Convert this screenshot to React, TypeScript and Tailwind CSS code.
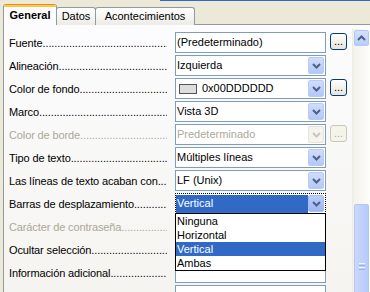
import React from "react";

/** XP-style property sheet of a form control, with the scroll-bar combo opened. */

type Kind = "text" | "combo" | "combo-off" | "color" | "focus";

interface Row {
  label: string;
  kind: Kind;
  value?: string;
  off?: boolean;
  more?: "on" | "off";
}

const rows: Row[] = [
  { label: "Fuente", kind: "text", value: "(Predeterminado)", more: "on" },
  { label: "Alineación", kind: "combo", value: "Izquierda" },
  { label: "Color de fondo", kind: "color", value: "0x00DDDDDD", more: "on" },
  { label: "Marco", kind: "combo", value: "Vista 3D" },
  { label: "Color de borde", kind: "combo-off", value: "Predeterminado", off: true, more: "off" },
  { label: "Tipo de texto", kind: "combo", value: "Múltiples líneas" },
  { label: "Las líneas de texto acaban con", kind: "combo", value: "LF (Unix)" },
  { label: "Barras de desplazamiento", kind: "focus", value: "Vertical" },
  { label: "Carácter de contraseña", kind: "text", off: true },
  { label: "Ocultar selección", kind: "combo" },
  { label: "Información adicional", kind: "text" },
  { label: "", kind: "text" },
];

const options = ["Ninguna", "Horizontal", "Vertical", "Ambas"];

// leader dots, a few more than the label column needs (the rest is clipped)
const dotsFor = (label: string) => ".".repeat(Math.max(6, 62 - Math.round(label.length * 1.5)));

function Chevron({ color, up = false }: { color: string; up?: boolean }) {
  return (
    <svg width="9" height="6" viewBox="0 0 9 6" className={up ? "rotate-180" : ""}>
      <polyline points="1,1 4.5,4.5 8,1" fill="none" stroke={color} strokeWidth="2" />
    </svg>
  );
}

function ArrowButton({ state }: { state: "on" | "off" | "hot" }) {
  const look =
    state === "off"
      ? "border-[#E6E4DA] bg-[#F4F3EE]"
      : state === "hot"
        ? "border-[#A7BEF3] bg-gradient-to-b from-[#B9CDFB] to-[#9DB7F4]"
        : "border-[#B9CBF5] bg-gradient-to-b from-[#CFDCFC] to-[#B3C8F7]";
  return (
    <div className={`mr-px flex h-[17px] w-[16px] shrink-0 items-center justify-center rounded-[2px] border ${look}`}>
      <Chevron color={state === "off" ? "#C9C7BA" : "#4D6185"} />
    </div>
  );
}

function MoreButton({ off }: { off: boolean }) {
  return (
    <div
      className={`mt-px flex h-[17px] w-[17px] items-end justify-center rounded-[3px] border pb-[2px] text-[11px] leading-none ${
        off
          ? "border-[#C9C7BA] bg-[#F5F4EA] text-[#ACA899]"
          : "border-[#003C74] bg-gradient-to-b from-white to-[#E6E4DA] text-black"
      }`}
    >
      ...
    </div>
  );
}

function Field({ row }: { row: Row }) {
  if (row.kind === "focus") {
    return (
      <div className="relative flex h-[21px] w-[151px] items-center border border-dotted border-black bg-white">
        <div className="flex h-[18px] flex-1 items-center bg-[#316AC5] pl-px text-white">{row.value}</div>
        <ArrowButton state="hot" />
        <ul className="absolute left-[-1px] top-[19px] z-10 w-[151px] border border-black bg-white">
          {options.map((o) => (
            <li
              key={o}
              className={`flex h-[14px] items-center pl-px ${o === "Vertical" ? "bg-[#316AC5] text-white" : "text-black"}`}
            >
              {o}
            </li>
          ))}
        </ul>
      </div>
    );
  }
  const combo = row.kind === "combo" || row.kind === "combo-off" || row.kind === "color";
  return (
    <div className="flex h-[21px] w-[151px] items-center border border-[#7F9DB9] bg-white">
      <div className={`flex flex-1 items-center pl-px ${row.off ? "text-[#ACA899]" : "text-black"}`}>
        {row.kind === "color" && (
          <span className="ml-[2px] mr-[5px] h-[10px] w-[18px] border border-[#555] bg-[#DDDDDD]" />
        )}
        {row.value}
      </div>
      {combo && <ArrowButton state={row.kind === "combo-off" ? "off" : "on"} />}
    </div>
  );
}

function Tab({ label, width, active }: { label: string; width: string; active?: boolean }) {
  if (active) {
    return (
      <div className={`relative z-10 -mr-px flex h-[21px] flex-col overflow-hidden rounded-t-[3px] border-x border-[#919B9C] bg-[#FCFCFE] ${width}`}>
        <div className="h-[1px] bg-[#E68B2C]" />
        <div className="h-[2px] bg-[#FFC73C]" />
        <div className="flex flex-1 items-center justify-center pb-[2px] font-bold">{label}</div>
      </div>
    );
  }
  return (
    <div className={`-mr-px mt-[3px] flex h-[18px] items-center justify-center rounded-t-[3px] border border-b-0 border-[#919B9C] bg-gradient-to-b from-white to-[#ECEBE6] ${width}`}>
      {label}
    </div>
  );
}

export default function App() {
  return (
    <div className="relative h-[292px] w-[370px] overflow-hidden bg-[#ECE9D8] font-['Liberation_Sans',Arial,sans-serif] text-[11px] text-black">
      <div className="ml-[160px] h-px bg-[#3169C6]" />
      <div className="flex items-end pl-[3px] pt-[3px]">
        <Tab label="General" width="w-[54px]" active />
        <Tab label="Datos" width="w-[40px]" />
        <Tab label="Acontecimientos" width="w-[100px]" />
        <div className="flex-1" />
      </div>
      <div className="-mt-px ml-[3px] flex h-[300px] border-l border-t border-[#919B9C] bg-gradient-to-b from-[#FCFCFE] to-[#F4F3EE]">
        <div className="flex w-[348px] flex-col gap-[2px] pl-[5px] pt-[7px]">
          {rows.map((r, i) => (
            <div key={i} className="flex h-[21px] items-center">
              <div
                className={`mr-[8px] flex w-[158px] overflow-hidden whitespace-nowrap pt-px tracking-[-0.12px] ${
                  r.off ? "text-[#ACA899]" : ""
                }`}
              >
                <span>{r.label}</span>
                {r.label && <span className="flex-1 overflow-hidden">{dotsFor(r.label)}</span>}
              </div>
              <Field row={r} />
              <div className="ml-[4px] w-[17px] self-start">
                {r.more && <MoreButton off={r.more === "off"} />}
              </div>
            </div>
          ))}
        </div>
        <div className="mt-[4px] flex w-[18px] flex-col border-l border-[#EEEDE5] bg-gradient-to-r from-[#F3F1EA] to-[#FDFDFA]">
          <div className="ml-px mt-px flex h-[16px] w-[15px] items-center justify-center rounded-[2px] border border-[#B4C8F6] bg-gradient-to-b from-[#D4E0FD] to-[#B9CDF8]">
            <Chevron color="#4D6185" up />
          </div>
          <div className="ml-px mt-[158px] flex h-[120px] w-[15px] flex-col items-center rounded-[2px] border border-[#B4C8F6] bg-gradient-to-r from-[#C9D8FC] to-[#B7CBF8] pt-[58px]">
            <div className="flex flex-col gap-px">
              <div className="h-px w-[6px] bg-[#EEF4FE]" />
              <div className="h-px w-[6px] bg-[#8CB0F8]" />
              <div className="h-px w-[6px] bg-[#EEF4FE]" />
              <div className="h-px w-[6px] bg-[#8CB0F8]" />
            </div>
          </div>
        </div>
      </div>
    </div>
  );
}
